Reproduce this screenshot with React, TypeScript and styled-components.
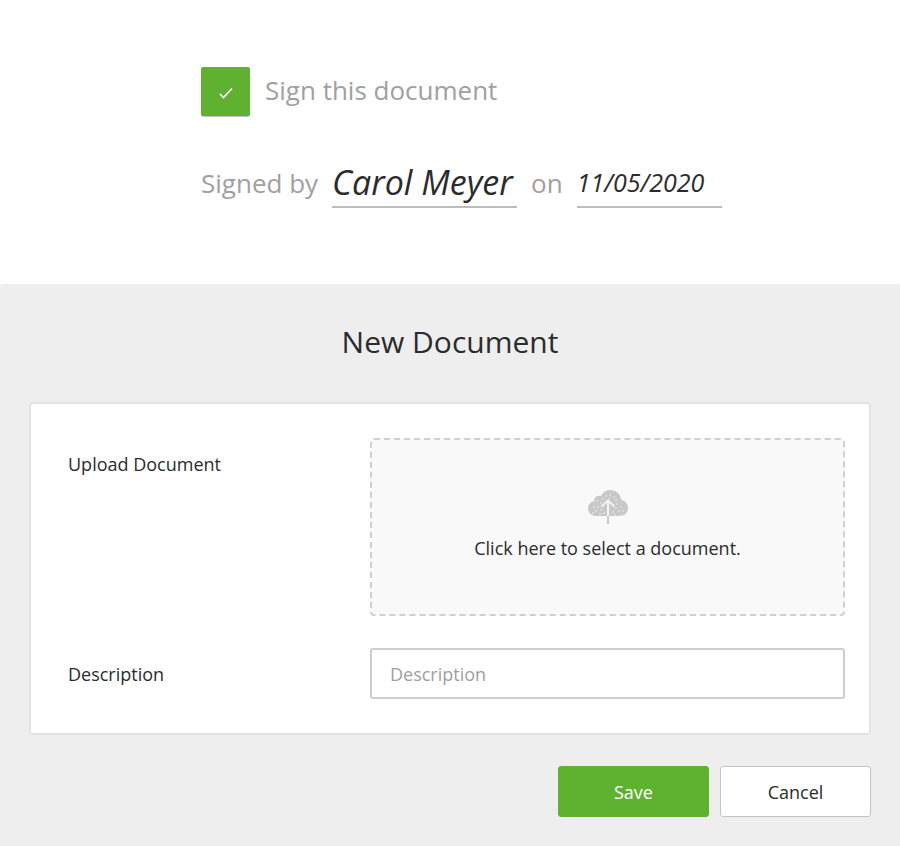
import React, { useState } from 'react';
import styled, { createGlobalStyle } from 'styled-components';

const green = '#5fb130';
const ink = '#2b2b2d';
const muted = '#a0a0a0';

const GlobalStyle = createGlobalStyle`
  *, *::before, *::after { box-sizing: border-box; }
  body {
    margin: 0;
    background: #fff;
    color: ${ink};
    font-family: "Open Sans", "Noto Sans", sans-serif;
    font-size: 18px;
    line-height: 24px;
  }
  button, input { font: inherit; color: inherit; }
`;

const Page = styled.div`
  display: flex;
  flex-direction: column;
  min-height: 100vh;
`;

const SignSection = styled.section`
  display: flex;
  flex-direction: column;
  gap: 40px;
  padding: 67px 24px 76px 201px;
  color: ${muted};
  font-size: 26px;
  line-height: 36px;
`;

const SignOption = styled.label`
  display: flex;
  align-items: center;
  gap: 15px;
  cursor: pointer;
`;

const OptionText = styled.span`
  padding-bottom: 3px;
`;

const CheckFrame = styled.span`
  display: grid;
  place-items: center;
  width: 49px;
  height: 49px;

  & > * { grid-area: 1 / 1; }
`;

const CheckInput = styled.input`
  appearance: none;
  width: 100%;
  height: 100%;
  margin: 0;
  border: 1px solid #c4c4c4;
  border-radius: 2px;
  background: #fff;
  cursor: pointer;

  &:checked {
    border-color: ${green};
    background: ${green};
    box-shadow: 0 1px 0 #c9c2cc;
  }
`;

const CheckMark = styled.svg`
  width: 14px;
  height: 12px;
  margin-top: 3px;
  pointer-events: none;
`;

const SignedLine = styled.div`
  display: flex;
  align-items: flex-end;
  gap: 14px;
`;

const SignedText = styled.span`
  padding-bottom: 7px;
`;

const Signature = styled.span<{ $width: number; $size: number }>`
  width: ${({ $width }) => $width}px;
  height: 52px;
  padding-top: 8px;
  border-bottom: 2px solid #bcbcbc;
  color: ${ink};
  font-family: "Homemade Apple", "Segoe Script", "Bradley Hand", "Open Sans", cursive;
  font-size: ${({ $size }) => $size}px;
  font-style: italic;
  font-weight: 500;
  line-height: 36px;
  white-space: nowrap;
`;

const FormSection = styled.form`
  flex: 1;
  padding: 35px 29px 29px;
  border-radius: 3px 3px 0 0;
  background: #eee;
`;

const Title = styled.h1`
  margin: 0 0 37px;
  font-size: 30px;
  font-weight: 400;
  line-height: 46px;
  text-align: center;
`;

const Card = styled.div`
  display: flex;
  flex-direction: column;
  gap: 32px;
  padding: 34px 24px 34px 37px;
  border: 2px solid #e3e3e3;
  border-radius: 4px;
  background: #fff;
`;

const Field = styled.div`
  display: grid;
  grid-template-columns: minmax(0, 302fr) minmax(0, 475fr);
`;

const FieldLabel = styled.label`
  padding-top: 14px;
`;

const DropZone = styled.label`
  display: flex;
  flex-direction: column;
  align-items: center;
  gap: 12px;
  height: 178px;
  padding-top: 50px;
  border: 2px dashed #d0d0d0;
  border-radius: 4px;
  background: #f9f9f9;
  cursor: pointer;
`;

const FileInput = styled.input`
  position: absolute;
  width: 1px;
  height: 1px;
  opacity: 0;
`;

const TextInput = styled.input`
  width: 100%;
  height: 51px;
  padding: 0 18px;
  border: 2px solid #cdcdcd;
  border-radius: 3px;
  background: #fff;

  &::placeholder { color: ${muted}; opacity: 1; }
`;

const Actions = styled.div`
  display: flex;
  justify-content: flex-end;
  gap: 11px;
  margin-top: 31px;
`;

const Button = styled.button<{ $primary?: boolean }>`
  width: 151px;
  height: 51px;
  border: 1px solid ${({ $primary }) => ($primary ? green : '#c4c4c4')};
  border-radius: 3px;
  background: ${({ $primary }) => ($primary ? green : '#fff')};
  color: ${({ $primary }) => ($primary ? '#fff' : ink)};
  cursor: pointer;
`;

const CloudDots = [
  [18, 6], [22, 5], [26, 7], [15, 9], [21, 9], [28, 10], [9, 11], [13, 13],
  [29, 14], [6, 17], [10, 17], [33, 17], [28, 18], [8, 21], [13, 20], [35, 21],
  [31, 21], [25, 22], [16, 23], [27, 25], [5, 23], [12, 24], [33, 25],
];

const CloudIcon = () => (
  <svg width="40" height="34" viewBox="0 0 40 34" aria-hidden="true">
    <path
      d="M8 26C3.500 26 0 23 0 18.500c0-4 2.500-6.500 6-7.500C6 7.500 9 5 13 6 15 2 18 0 22 0c6 0 10.500 4 11 9.500C37.500 11 40 14 40 18c0 4.800-3.500 8-8 8Z"
      fill="#c8c8c8"
    />
    {CloudDots.map(([x, y]) => (
      <circle key={`${x}-${y}`} cx={x} cy={y} r="0.7" fill="#f9f9f9" />
    ))}
    <path d="M20 11v15M13.500 16.500l6.500-6 6.500 6" fill="none" stroke="#f4f4f4" strokeWidth="2" />
    <path d="M20 26v8" stroke="#c8c8c8" strokeWidth="2" />
  </svg>
);

export default function App() {
  const [signed, setSigned] = useState(true);
  const [description, setDescription] = useState('');

  return (
    <>
      <GlobalStyle />
      <Page>
        <SignSection>
          <SignOption>
            <CheckFrame>
              <CheckInput
                type="checkbox"
                checked={signed}
                onChange={(event) => setSigned(event.target.checked)}
              />
              <CheckMark viewBox="0 0 14 12" aria-hidden="true">
                <path d="M1 7l3.500 3.500L13 1.500" fill="none" stroke="#fff" strokeWidth="1.6" />
              </CheckMark>
            </CheckFrame>
            <OptionText>Sign this document</OptionText>
          </SignOption>
          <SignedLine>
            <SignedText>Signed by</SignedText>
            <Signature $width={185} $size={34}>Carol Meyer</Signature>
            <SignedText>on</SignedText>
            <Signature as="time" dateTime="2020-11-05" $width={145} $size={25}>
              11/05/2020
            </Signature>
          </SignedLine>
        </SignSection>

        <FormSection onSubmit={(event) => event.preventDefault()}>
          <Title>New Document</Title>
          <Card>
            <Field>
              <FieldLabel htmlFor="document">Upload Document</FieldLabel>
              <DropZone>
                <FileInput id="document" type="file" />
                <CloudIcon />
                Click here to select a document.
              </DropZone>
            </Field>
            <Field>
              <FieldLabel htmlFor="description">Description</FieldLabel>
              <TextInput
                id="description"
                type="text"
                placeholder="Description"
                value={description}
                onChange={(event) => setDescription(event.target.value)}
              />
            </Field>
          </Card>
          <Actions>
            <Button type="submit" $primary>Save</Button>
            <Button type="button">Cancel</Button>
          </Actions>
        </FormSection>
      </Page>
    </>
  );
}
